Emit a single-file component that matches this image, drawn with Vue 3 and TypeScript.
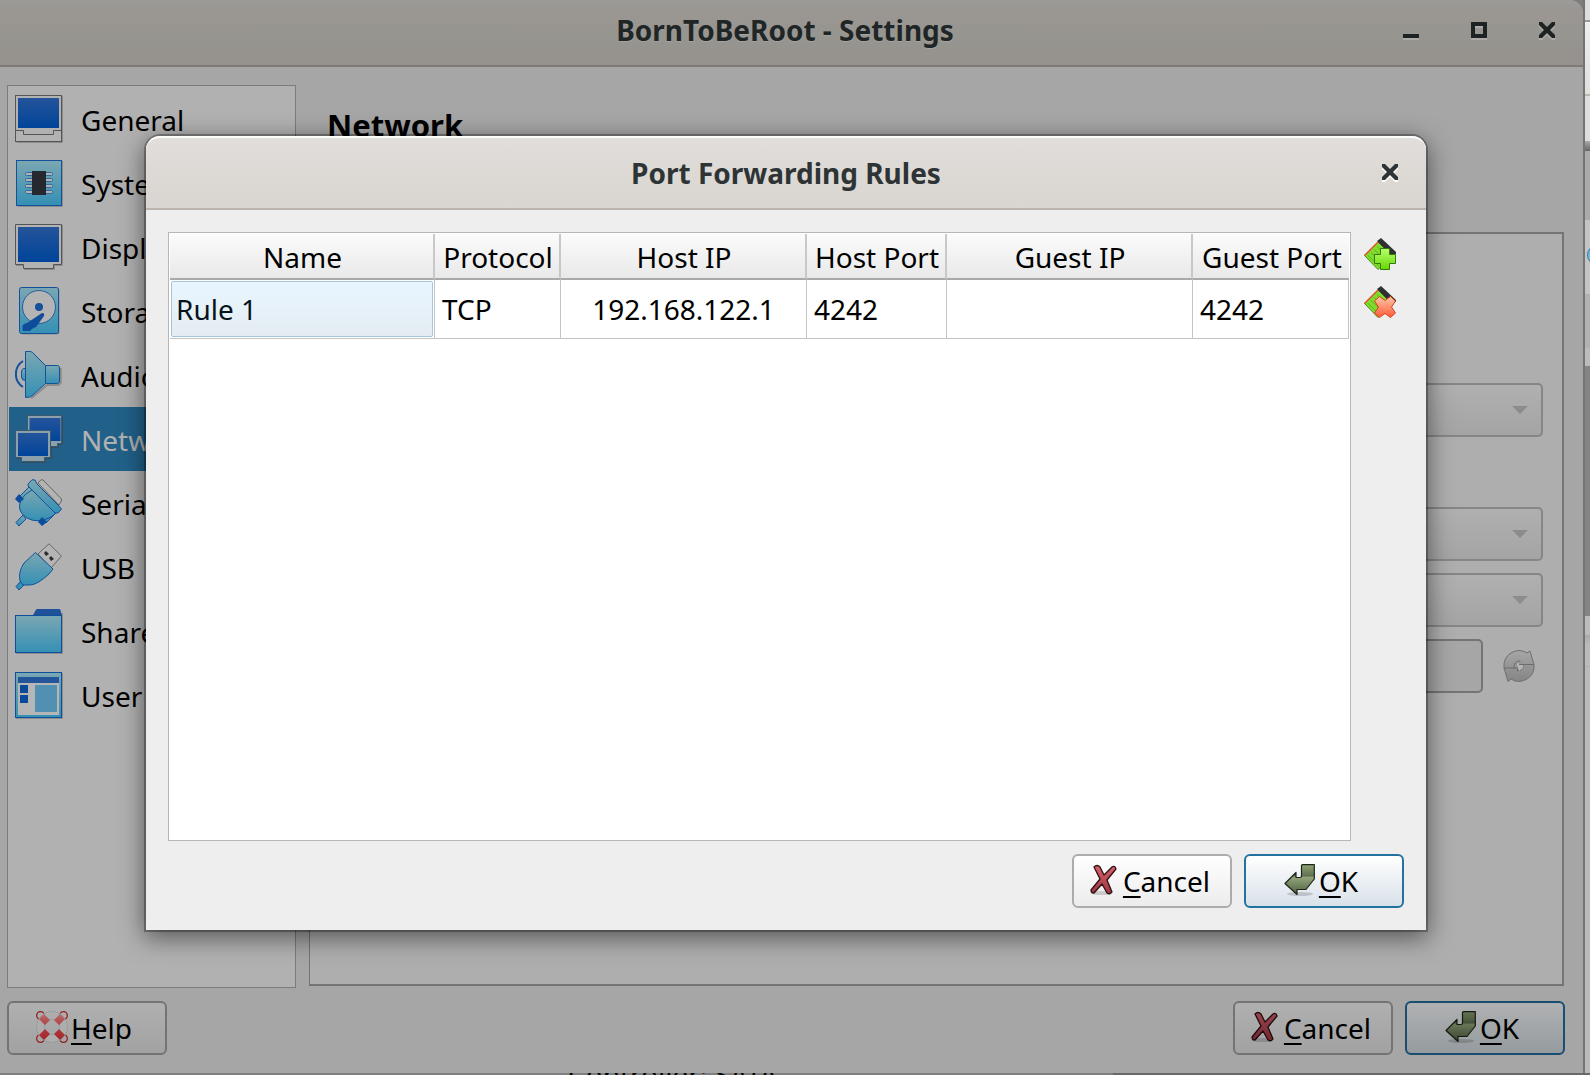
<script setup lang="ts">
interface Page { label: string; icon: string }
interface Rule {
  name: string
  protocol: string
  hostIp: string
  hostPort: string
  guestIp: string
  guestPort: string
}

const pages: Page[] = [
  { label: 'General', icon: 'general' },
  { label: 'System', icon: 'system' },
  { label: 'Display', icon: 'display' },
  { label: 'Storage', icon: 'storage' },
  { label: 'Audio', icon: 'audio' },
  { label: 'Network', icon: 'network' },
  { label: 'Serial Ports', icon: 'serial' },
  { label: 'USB', icon: 'usb' },
  { label: 'Shared Folders', icon: 'shared' },
  { label: 'User Interface', icon: 'interface' },
]
const current = 'Network'

const rules: Rule[] = [
  { name: 'Rule 1', protocol: 'TCP', hostIp: '192.168.122.1', hostPort: '4242', guestIp: '', guestPort: '4242' },
]
</script>

<template>
  <div class="desktop">
    <svg class="sprites" width="0" height="0" aria-hidden="true">
      <defs>
        <linearGradient id="screen" x1="0" y1="0" x2="0" y2="1">
          <stop offset="0" stop-color="#24549a" /><stop offset="1" stop-color="#00449a" />
        </linearGradient>
        <linearGradient id="aqua" x1="0" y1="0" x2="0" y2="1">
          <stop offset="0" stop-color="#7ba7b2" /><stop offset="1" stop-color="#3490b4" />
        </linearGradient>
        <linearGradient id="lime" x1="0" y1="0" x2="0" y2="1">
          <stop offset="0" stop-color="#b8ff70" /><stop offset="1" stop-color="#66d800" />
        </linearGradient>
        <linearGradient id="coral" x1="0" y1="0" x2="0" y2="1">
          <stop offset="0" stop-color="#ffc8a8" /><stop offset="1" stop-color="#ff5a38" />
        </linearGradient>
        <linearGradient id="ruby" x1="0" y1="0" x2="0" y2="1">
          <stop offset="0" stop-color="#d8606c" /><stop offset="1" stop-color="#9c3540" />
        </linearGradient>
        <linearGradient id="olive" x1="0" y1="0" x2="0" y2="1">
          <stop offset="0" stop-color="#8fa374" /><stop offset="0.38" stop-color="#5f7050" />
          <stop offset="0.42" stop-color="#92a579" /><stop offset="1" stop-color="#4d5d43" />
        </linearGradient>
        <linearGradient id="buoy" x1="0" y1="0" x2="0" y2="1">
          <stop offset="0" stop-color="#b8696b" /><stop offset="0.5" stop-color="#ad3b3e" />
          <stop offset="1" stop-color="#a62528" />
        </linearGradient>
        <linearGradient id="steel" x1="0" y1="0" x2="0" y2="1">
          <stop offset="0" stop-color="#a6a6a6" /><stop offset="1" stop-color="#858585" />
        </linearGradient>
      </defs>

      <symbol id="general" viewBox="0 0 48 48">
        <path d="M1.5 47.5H47.5V1" fill="none" stroke="#8c8c8c" />
        <rect x=".5" y=".5" width="46" height="46" fill="#b2b2b2" stroke="#555" />
        <rect x="3" y="3" width="41" height="30" fill="url(#screen)" />
        <path d="M1 35.5H8.500V39.500H38.500V35.500H46" fill="none" stroke="#555" />
      </symbol>
      <symbol id="system" viewBox="0 0 48 48">
        <path d="M2.500 47.500H47.500V2" fill="none" stroke="#8c8c8c" />
        <rect x="1.500" y="1.500" width="45" height="45" fill="url(#aqua)" stroke="#14519a" />
        <g fill="#b2b2b2" stroke="#3068a0">
          <rect x="10.500" y="13.500" width="27" height="3" rx="1" />
          <rect x="10.500" y="19.500" width="27" height="3" rx="1" />
          <rect x="10.500" y="25.500" width="27" height="3" rx="1" />
          <rect x="10.500" y="31.500" width="27" height="3" rx="1" />
        </g>
        <rect x="17" y="12" width="14" height="24" fill="#262830" />
      </symbol>
      <symbol id="display" viewBox="0 0 48 48">
        <path d="M1 42.500H8M9 46.500H39.500V42.500H47.500V2" fill="none" stroke="#8c8c8c" />
        <path d="M.5 1.500H46.500V41.500H38.500V45.500H8.500V41.500H.5Z" fill="#b2b2b2" stroke="#555" />
        <rect x="3" y="4" width="41" height="35" fill="url(#screen)" />
      </symbol>
      <symbol id="storage" viewBox="0 0 48 48">
        <rect x="5.500" y="1.500" width="39" height="46" rx="2" fill="#8c8c8c" />
        <rect x="4.500" y=".5" width="39" height="46" rx="2" fill="url(#aqua)" stroke="#14519a" />
        <circle cx="24" cy="20" r="16.500" fill="#b4b4b4" stroke="#2460a0" />
        <circle cx="24" cy="20" r="4" fill="#14519a" />
        <path d="M27 26Q30 26 29 29L21 40Q16 42 15 44H8.500Q7.500 44 7.500 43V39Q8 37 12 36Z" fill="#0f4d9b" />
      </symbol>
      <symbol id="audio" viewBox="0 0 48 48">
        <path d="M8 10C-1.500 16-1.500 30 8 36" fill="none" stroke="#14519a" stroke-width="2" />
        <path d="M16 47.500L32 34H43.500L45.800 32V17" fill="none" stroke="#8c8c8c" stroke-width="2" />
        <g fill="url(#aqua)" stroke="#14519a">
          <path d="M10.500 17.500H8.500Q6.500 18 6.500 21V26Q6.500 29.500 10.500 29.500Z" />
          <path d="M30.500 14.500H42.500Q44.500 14.500 44.500 17V30Q44.500 32.500 42.500 32.500H30.500Z" />
          <path d="M10.500 .5H15.500Q18 1 19 3L30.500 14.500V32.500L18 44Q15 47 10.500 46.500Z" />
        </g>
      </symbol>
      <symbol id="network" viewBox="0 0 48 48">
        <g fill="#8ba0ab" stroke="#385a70">
          <path d="M12.500 .5H46.500V28.500H42.500V31.500H12.500Z" />
          <rect x="14.500" y="3" width="31" height="23" fill="url(#screen)" stroke="none" />
          <path d="M.5 15.500H35.500V42.500H29.500V46.500H6.500V42.500H.5Z" />
        </g>
        <rect x="3" y="18" width="30" height="23" fill="url(#screen)" />
        <path d="M1 43.500H6M7 47.500H30.500V43.500H36.500V32.500H43.500V29.500H47.500V2" fill="none" stroke="#344c5c" />
      </symbol>
      <symbol id="serial" viewBox="0 0 48 48">
        <path d="M23 4L26 .8Q27 .5 28 1L46.500 20Q47 22 44 26Z" fill="#b4b4b4" stroke="#666" />
        <g fill="url(#aqua)" stroke="#14519a">
          <path d="M8 36L1 43.500L4 47L11 40Z" />
          <path d="M5 17L15 7L19 11L8 22ZM25 39L36 29L41 34L31 44Z" />
          <path d="M17 11L41 34L36 38Q22 45 12 39Q1 32 6 21Q9 15 17 11Z" />
          <path d="M13 5L17 .8L20 1L22 5L43 26L46.500 30L43 34L40 34L13 7Z" />
        </g>
        <path d="M0 20L4 15L9 20L4 24ZM23 43L27 38L32 43L27 47Z" fill="#0b4c9b" />
      </symbol>
      <symbol id="usb" viewBox="0 0 48 48">
        <path d="M23 11L34 .8L46.500 13L36 25Z" fill="#b4b4b4" stroke="#666" />
        <path d="M29 10L31 8L34 11L31 13ZM34 15L36 13L39 16L36 18Z" fill="#2c2c2c" />
        <path d="M6 38L1 43.500L4 47L9 42Z" fill="#3490b4" stroke="#14519a" />
        <path d="M20.500 9.500L38 26L34 31Q22 42 15 42L8 42L5 38Q3 29 9 20Z" fill="url(#aqua)" stroke="#14519a" />
      </symbol>
      <symbol id="shared" viewBox="0 0 48 48">
        <path d="M1 46.500H47.500V6" fill="none" stroke="#8c8c8c" />
        <path d="M18 8L21.500 2H45L47 8Z" fill="#1f5299" />
        <rect x=".5" y="8.500" width="46" height="37" fill="url(#aqua)" stroke="#0e4f9c" />
      </symbol>
      <symbol id="interface" viewBox="0 0 48 48">
        <path d="M1 47.500H47.500V2" fill="none" stroke="#8c8c8c" />
        <rect x=".5" y="1.500" width="46" height="45" fill="url(#aqua)" stroke="#0e4f9c" />
        <rect x="3" y="6" width="41" height="38" fill="#b6b6b6" />
        <rect x="3" y="6" width="41" height="6" fill="#24549a" />
        <path d="M5 14H13V22H5ZM5 24H13V32H5Z" fill="#08499a" />
        <rect x="20" y="14" width="22" height="27" fill="#5190b0" />
      </symbol>

      <symbol id="card" viewBox="0 0 32 32">
        <path d="M.5 17.500L14 4L28 18L14 31.500Z" fill="#7fdc2c" stroke="#4b8a22" />
        <path d="M.5 17.500L14 4" stroke="#e0502c" stroke-width="1.500" />
        <path d="M4 17.500L15 28M7 14.500L18 25M10 11.500L21 22M13 8.500L24 19" stroke="#55a81e" stroke-width=".8" />
        <path d="M13 3L17 0L32 14V16H26Z" fill="#303030" />
      </symbol>
      <symbol id="add-rule" viewBox="0 0 32 32">
        <use href="#card" width="32" height="32" />
        <path d="M16.500 10.500H25.500V16.500H31.500V25.500H25.500V31.500H16.500V25.500H10.500V16.500H16.500Z" fill="url(#lime)" stroke="#347a08" />
      </symbol>
      <symbol id="remove-rule" viewBox="0 0 32 32">
        <use href="#card" width="32" height="32" />
        <path d="M10.500 15L15.500 10.500L21 14.500L26.500 10.500L31.500 15L27.500 21L31.500 27L26.500 31.500L21 27.500L15.500 31.500L10.500 27L14.500 21Z" fill="url(#coral)" stroke="#d8401c" stroke-linejoin="round" />
      </symbol>

      <symbol id="cross" viewBox="0 0 32 32">
        <ellipse cx="13" cy="29" rx="11" ry="2" fill="#000" opacity=".16" />
        <path d="M6 3Q9 0 12 3L16 11L24 3Q27 1 28 5L19 16L24 28Q22 31 19 29L14 20L6 29Q3 29 3 26L12 15Z" fill="url(#ruby)" stroke="#2a1013" stroke-width="1.300" stroke-linejoin="round" />
      </symbol>
      <symbol id="enter" viewBox="0 0 32 32">
        <ellipse cx="16" cy="30" rx="13" ry="2" fill="#000" opacity=".16" />
        <path d="M17.500 1.500Q17.500 .7 18.500 .7H30.300V15L22 25.500H13V30.500L1 19.500L12 8.500V13.500H16Q17.500 13.500 17.500 12Z" fill="url(#olive)" stroke="#1d2418" stroke-width="1.200" stroke-linejoin="round" />
      </symbol>
      <symbol id="lifebuoy" viewBox="0 0 32 32">
        <g fill="none" stroke="#941c1e" stroke-width="1.300">
          <circle cx="4.500" cy="4.500" r="3.800" /><circle cx="27.500" cy="4.500" r="3.800" />
          <circle cx="4.500" cy="27.500" r="3.800" /><circle cx="27.500" cy="27.500" r="3.800" />
        </g>
        <circle cx="16" cy="16" r="11.500" fill="none" stroke="#999" stroke-width="8.500" />
        <circle cx="16" cy="16" r="11.500" fill="none" stroke="#adadad" stroke-width="7" />
        <path d="M3 8L8 3L14 9L9 14ZM29 8L24 3L18 9L23 14ZM3 24L8 29L14 23L9 18ZM29 24L24 29L18 23L23 18Z" fill="url(#buoy)" />
      </symbol>
      <symbol id="refresh" viewBox="0 0 32 32">
        <path d="M1 18Q0 8 8 3Q16-2 24 3L27 1L31 14.500Q32 24 24 29Q15 34 8 29L5 31.500Z" fill="url(#steel)" stroke="#707070" />
        <path d="M1 18H15L14 21L18 20Q21 18 20 14.500H31M20 14.500H16L17 11Q11 11 11 18" fill="none" stroke="#6c6c6c" />
        <path d="M14 14L17 11.500L16 15H20V18L16 21L15 18Z" fill="#b4b4b4" />
      </symbol>
      <symbol id="close" viewBox="0 0 16 16">
        <path d="M0 0H3L8 5L13 0H16V3L11 8L16 13V16H13L8 11L3 16H0V13L5 8L0 3Z" />
      </symbol>
    </svg>

    <main class="window">
      <header class="titlebar">
        <h1 class="title">BornToBeRoot - Settings</h1>
        <div class="controls">
          <button type="button" class="control" aria-label="Minimize">
            <svg width="16" height="16"><rect y="12" width="16" height="4" /></svg>
          </button>
          <button type="button" class="control" aria-label="Maximize">
            <svg width="16" height="16"><rect x="2" y="2" width="12" height="12" class="hollow" /></svg>
          </button>
          <button type="button" class="control" aria-label="Close">
            <svg width="16" height="16"><use href="#close" /></svg>
          </button>
        </div>
      </header>

      <div class="content">
        <div class="columns">
          <nav class="pages">
            <a
              v-for="page in pages"
              :key="page.label"
              href="#"
              class="page"
              :class="{ selected: page.label === current }"
            >
              <svg width="48" height="48" aria-hidden="true"><use :href="'#' + page.icon" /></svg>
              <span>{{ page.label }}</span>
            </a>
          </nav>
          <section class="detail">
            <h2 class="heading">{{ current }}</h2>
            <div class="panel">
              <div class="combo first"><select aria-label="Attached to" disabled></select></div>
              <div class="combo"><select aria-label="Adapter Type" disabled></select></div>
              <div class="combo"><select aria-label="Promiscuous Mode" disabled></select></div>
              <div class="address">
                <input type="text" aria-label="MAC Address" disabled />
                <button type="button" class="tool" aria-label="Refresh" disabled>
                  <svg width="32" height="32"><use href="#refresh" /></svg>
                </button>
              </div>
            </div>
          </section>
        </div>
        <footer class="actions">
          <button type="button" class="push help">
            <svg width="32" height="32"><use href="#lifebuoy" /></svg><span><u>H</u>elp</span>
          </button>
          <button type="button" class="push">
            <svg width="32" height="32"><use href="#cross" /></svg><span><u>C</u>ancel</span>
          </button>
          <button type="button" class="push default">
            <svg width="32" height="32"><use href="#enter" /></svg><span><u>O</u>K</span>
          </button>
        </footer>
      </div>
    </main>

    <aside class="behind-right"><i class="orb"></i></aside>
    <div class="behind-bottom"><span>Controller: SATA</span></div>

    <section class="dialog" role="dialog" aria-labelledby="dialog-title">
      <header class="titlebar">
        <h2 id="dialog-title" class="title">Port Forwarding Rules</h2>
        <div class="controls">
          <button type="button" class="control" aria-label="Close">
            <svg width="16" height="16"><use href="#close" /></svg>
          </button>
        </div>
      </header>
      <div class="dialog-body">
        <div class="editor">
          <div class="view">
            <table>
              <colgroup>
                <col class="c-name" /><col class="c-protocol" /><col />
                <col class="c-host-port" /><col /><col class="c-guest-port" />
              </colgroup>
              <thead>
                <tr>
                  <th>Name</th><th>Protocol</th><th>Host IP</th>
                  <th>Host Port</th><th>Guest IP</th><th>Guest Port</th>
                </tr>
              </thead>
              <tbody>
                <tr v-for="rule in rules" :key="rule.name">
                  <td class="current"><div>{{ rule.name }}</div></td>
                  <td>{{ rule.protocol }}</td>
                  <td class="ip">{{ rule.hostIp }}</td>
                  <td>{{ rule.hostPort }}</td>
                  <td class="ip">{{ rule.guestIp }}</td>
                  <td>{{ rule.guestPort }}</td>
                </tr>
              </tbody>
            </table>
          </div>
          <div class="tools">
            <button type="button" class="tool" aria-label="Add rule">
              <svg width="32" height="32"><use href="#add-rule" /></svg>
            </button>
            <button type="button" class="tool" aria-label="Remove rule">
              <svg width="32" height="32"><use href="#remove-rule" /></svg>
            </button>
          </div>
        </div>
        <footer class="actions">
          <button type="button" class="push">
            <svg width="32" height="32"><use href="#cross" /></svg><span><u>C</u>ancel</span>
          </button>
          <button type="button" class="push default">
            <svg width="32" height="32"><use href="#enter" /></svg><span><u>O</u>K</span>
          </button>
        </footer>
      </div>
    </section>
  </div>
</template>

<style>
body {
  margin: 0;
  background: #7f7d7c;
}
</style>

<style scoped>
.desktop {
  position: relative;
  display: grid;
  grid-template: minmax(0, 1fr) 2px / minmax(0, 1fr) 7px;
  height: 100vh;
  overflow: hidden;
  font: 28px/36px "Noto Sans", sans-serif;
  color: #000;
}
.desktop *,
.desktop *::after {
  box-sizing: border-box;
}
.sprites {
  position: absolute;
}
svg {
  display: block;
  flex: none;
}
button {
  font: inherit;
  color: inherit;
}
h1,
h2 {
  margin: 0;
  font: inherit;
  font-weight: 700;
}

/* Settings window */
.window {
  display: flex;
  flex-direction: column;
  min-width: 0;
  background: #a6a6a6;
  border-top-right-radius: 14px;
}
.titlebar {
  display: grid;
  grid-template-columns: 1fr auto 1fr;
  align-items: center;
}
.title {
  grid-column: 2;
}
.controls {
  display: flex;
  justify-content: flex-end;
  gap: 52px;
}
.control {
  padding: 0;
  border: 0;
  background: none;
}
.window > .titlebar {
  flex: none;
  height: 67px;
  padding: 0 13px 6px 0;
  border-bottom: 2px solid #807a76;
  border-top-right-radius: 14px;
  background: linear-gradient(#9a9a97, #9b9692 20%, #96958f 60%, #96918d);
  color: #202526;
  text-shadow: 0 1px #a5a3a0;
}
.window .controls {
  margin-right: 15px;
}
.window .control {
  fill: #1d2223;
  filter: drop-shadow(0 2px #adabaa);
}
.hollow {
  fill: none;
  stroke: #1d2223;
  stroke-width: 4px;
}
.content {
  display: flex;
  flex: 1;
  flex-direction: column;
  min-height: 0;
  padding: 18px 18px 18px 7px;
}
.columns {
  display: flex;
  flex: 1;
  gap: 13px;
  min-height: 0;
}
.pages {
  flex: none;
  width: 289px;
  padding: 1px;
  border: 1px solid #7c7c7c;
  background: #b1b1b1;
  overflow: hidden;
}
.page {
  display: flex;
  align-items: center;
  gap: 18px;
  height: 64px;
  padding-left: 6px;
  color: #000;
  text-decoration: none;
  white-space: nowrap;
}
.page span {
  padding-top: 2px;
}
.page.selected {
  background: #216189;
  color: #b1b1b1;
}
.detail {
  display: flex;
  flex: 1;
  flex-direction: column;
  min-width: 0;
  padding: 22px 1px 2px 0;
}
.heading {
  height: 125px;
  padding-left: 18px;
  font-size: 31px;
}
.panel {
  display: flex;
  flex: 1;
  flex-direction: column;
  gap: 12px;
  padding: 149px 19px 0 200px;
  border: 2px solid #747474;
  border-left-width: 1px;
  background: #aeaeae;
}
.combo {
  position: relative;
}
.combo.first {
  margin-bottom: 58px;
}
.combo select {
  display: block;
  width: 100%;
  height: 54px;
  border: 2px solid #868686;
  border-radius: 5px;
  background: linear-gradient(#b0b0b0, #a4a4a4);
  appearance: none;
  opacity: 1;
}
.combo::after {
  content: "";
  position: absolute;
  top: 23px;
  right: 15px;
  border: 8px solid transparent;
  border-top-color: #8c8c8c;
  border-bottom-width: 0;
}
.address {
  display: flex;
  align-items: center;
  gap: 20px;
  padding-right: 8px;
}
.address input {
  flex: 1;
  min-width: 0;
  height: 54px;
  border: 2px solid #747474;
  border-radius: 5px;
  background: #a6a6a6;
}
.tool {
  padding: 0;
  border: 0;
  background: none;
}
.actions {
  display: flex;
  justify-content: flex-end;
  gap: 12px;
  padding-top: 13px;
}
.push {
  display: flex;
  align-items: center;
  justify-content: center;
  gap: 3px;
  width: 160px;
  height: 54px;
  padding: 0 6px 0 0;
  border: 2px solid #747474;
  border-radius: 6px;
  background: linear-gradient(#b0b0b0, #a2a2a2);
}
.push u {
  text-decoration-thickness: 2px;
  text-underline-offset: 4px;
  text-decoration-skip-ink: none;
}
.push svg {
  margin-bottom: 2px;
}
.help {
  margin-right: auto;
}
.window .default {
  border-color: #184f70;
  background: linear-gradient(#b0b1b2, #959b9f);
}
.window .push:not(.help) svg {
  filter: brightness(0.72);
}

/* Windows showing behind this one */
.behind-right {
  position: relative;
  overflow: hidden;
  border-left: 2px solid #747474;
  background: linear-gradient(
    #dededc 20px, #999 20px 22px, #eee 22px, #e2e0de 94px, #bdb5af 94px 96px,
    #dedede 96px 141px, #aaa 141px, #666 151px, #aaa 151px 220px,
    #c4c4c4 220px 294px, #b2b2b2 294px 348px, #bcbcbc 348px 366px,
    #858585 366px 616px, #bcbcbc 616px 635px, #aaa 635px, #bbb 645px 666px,
    #b0b0b0 666px 667px, #bbb 667px
  );
}
.orb {
  position: absolute;
  top: 245px;
  left: 2px;
  width: 20px;
  height: 20px;
  border: 1px solid #2878a8;
  border-radius: 10px;
  background: #78b8dc;
}
.behind-bottom {
  grid-column: 1 / -1;
  display: flex;
  align-items: center;
  overflow: hidden;
  padding-left: 568px;
  background: linear-gradient(90deg, #7f7f7f 70%, #6c6868 70%);
}

/* Port forwarding dialog */
.dialog {
  position: absolute;
  inset: 136px 164px 145px 146px;
  display: flex;
  flex-direction: column;
  border-radius: 14px 14px 0 0;
  background: #eee;
  box-shadow: 0 0 0 2px rgba(0, 0, 0, 0.28), 0 6px 24px 2px rgba(0, 0, 0, 0.5);
}
.dialog > .titlebar {
  flex: none;
  height: 74px;
  padding-bottom: 2px;
  border-top: 2px solid #fcfcfb;
  border-bottom: 2px solid #bcb6ae;
  border-radius: 14px 14px 0 0;
  background: linear-gradient(#e1dedb, #d9d5d0);
  color: #2e3436;
}
.dialog .title {
  padding-top: 2px;
}
.dialog .controls {
  margin-right: 28px;
}
.dialog .control {
  fill: #2e3436;
  filter: drop-shadow(0 2px #fff);
}
.dialog-body {
  display: flex;
  flex: 1;
  flex-direction: column;
  min-height: 0;
  padding: 22px;
}
.editor {
  display: flex;
  flex: 1;
  gap: 13px;
  min-height: 0;
}
.view {
  flex: 1;
  min-width: 0;
  padding: 1px;
  border: 1px solid #b6b6b6;
  background: #fff;
}
.tools {
  display: flex;
  flex-direction: column;
  gap: 16px;
  padding: 6px 8px 0 0;
}
table {
  width: 100%;
  table-layout: fixed;
  border-collapse: separate;
  border-spacing: 0;
}
.c-name {
  width: 265px;
}
.c-protocol {
  width: 126px;
}
.c-host-port {
  width: 140px;
}
.c-guest-port {
  width: 156px;
}
th {
  height: 46px;
  padding: 1px 0 0 2px;
  border-right: 2px solid #c8c8c8;
  border-bottom: 2px solid #a9a9a9;
  background: linear-gradient(#fbfbfb, #e9e9e9);
  font-weight: 400;
  white-space: nowrap;
}
th:last-child {
  border-right: 0;
}
td {
  height: 59px;
  padding: 0 7px;
  border-right: 1px solid #c4c4c4;
  border-bottom: 1px solid #c4c4c4;
}
td.ip {
  text-align: center;
}
td.current {
  padding: 1px;
}
td.current div {
  height: 56px;
  padding: 9px 4px;
  border: 1px solid #a6c5da;
  border-radius: 2px;
  background: linear-gradient(#e9f6ff, #e4ecf2);
  color: #06131a;
}
.dialog .push {
  border-color: #acacac;
  background: linear-gradient(#fff, #ececec);
}
.dialog .default {
  border-color: #2472a0;
  background: linear-gradient(#fff, #d8e1e9);
}
</style>
